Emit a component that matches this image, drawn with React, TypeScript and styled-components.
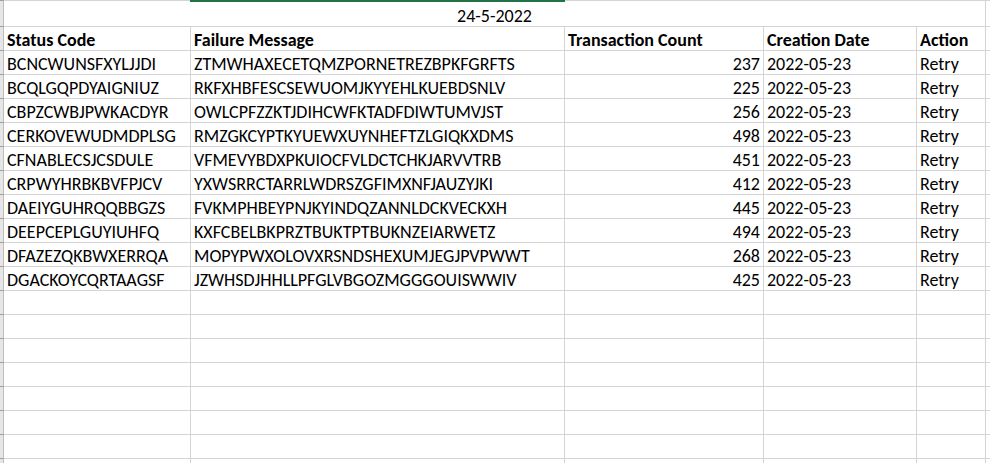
import React from 'react';
import styled, { createGlobalStyle } from 'styled-components';

const GlobalStyle = createGlobalStyle`
  html, body {
    margin: 0;
    padding: 0;
    background: #fff;
    overflow: hidden;
  }
`;

const GRID = '#d4d4d4';

// worksheet: row-header sliver, columns A-E, then the rest of the window
const Sheet = styled.div`
  position: relative;
  display: grid;
  grid-template-columns: 4px 187px 374px 199px 153px 69px 1fr;
  width: 990px;
  height: 463px;
  overflow: hidden;
  font-family: Carlito, Calibri, Lato, sans-serif;
  font-size: 18px;
  color: #000;
`;

const Cell = styled.div<{ $h: number; $align?: 'left' | 'right' | 'center'; $bold?: boolean; $span?: number }>`
  box-sizing: border-box;
  height: ${p => p.$h}px;
  border-right: 1px solid ${GRID};
  border-bottom: 1px solid ${GRID};
  display: flex;
  align-items: flex-end;
  justify-content: ${p => (p.$align === 'right' ? 'flex-end' : p.$align === 'center' ? 'center' : 'flex-start')};
  padding: 0 3px 1px;
  line-height: 18px;
  font-weight: ${p => (p.$bold ? 700 : 400)};
  white-space: nowrap;
  overflow: hidden;
  ${p => (p.$span ? `grid-column: span ${p.$span};` : '')}
`;

// the bottom edge of the row above, cut off by the window
const EdgeCell = styled.div`
  height: 0;
  border-right: 1px solid ${GRID};
  border-bottom: 1px solid ${GRID};
`;

const Filler = styled.div<{ $h: number }>`
  box-sizing: border-box;
  height: ${p => p.$h}px;
  border-bottom: 1px solid ${GRID};
`;

const RowHead = styled.div<{ $h: number }>`
  box-sizing: border-box;
  height: ${p => p.$h}px;
  background: #e6e6e6;
  border-right: 1px solid #bdbdbd;
  border-bottom: 1px solid #9f9f9f;
`;

const Selection = styled.div`
  position: absolute;
  top: 0;
  left: 190px;
  width: 375px;
  height: 2px;
  background: #217346;
`;

type Row = [string, string, number];

const rows: Row[] = [
  ['BCNCWUNSFXYLJJDI', 'ZTMWHAXECETQMZPORNETREZBPKFGRFTS', 237],
  ['BCQLGQPDYAIGNIUZ', 'RKFXHBFESCSEWUOMJKYYEHLKUEBDSNLV', 225],
  ['CBPZCWBJPWKACDYR', 'OWLCPFZZKTJDIHCWFKTADFDIWTUMVJST', 256],
  ['CERKOVEWUDMDPLSG', 'RMZGKCYPTKYUEWXUYNHEFTZLGIQKXDMS', 498],
  ['CFNABLECSJCSDULE', 'VFMEVYBDXPKUIOCFVLDCTCHKJARVVTRB', 451],
  ['CRPWYHRBKBVFPJCV', 'YXWSRRCTARRLWDRSZGFIMXNFJAUZYJKI', 412],
  ['DAEIYGUHRQQBBGZS', 'FVKMPHBEYPNJKYINDQZANNLDCKVECKXH', 445],
  ['DEEPCEPLGUYIUHFQ', 'KXFCBELBKPRZTBUKTPTBUKNZEIARWETZ', 494],
  ['DFAZEZQKBWXERRQA', 'MOPYPWXOLOVXRSNDSHEXUMJEGJPVPWWT', 268],
  ['DGACKOYCQRTAAGSF', 'JZWHSDJHHLLPFGLVBGOZMGGGOUISWWIV', 425],
];

const Line = ({ h, children }: { h: number; children?: React.ReactNode }) => (
  <>
    <RowHead $h={h} />
    {children}
    <Filler $h={h} />
  </>
);

export default function App() {
  return (
    <>
      <GlobalStyle />
      <Sheet>
        <Line h={1}>
          {[0, 1, 2, 3, 4].map(i => (
            <EdgeCell key={i} />
          ))}
        </Line>
        <Line h={26}>
          <Cell $h={26} $span={5} $align="center">24-5-2022</Cell>
        </Line>
        <Line h={24}>
          <Cell $h={24} $bold>Status Code</Cell>
          <Cell $h={24} $bold>Failure Message</Cell>
          <Cell $h={24} $bold>Transaction Count</Cell>
          <Cell $h={24} $bold>Creation Date</Cell>
          <Cell $h={24} $bold>Action</Cell>
        </Line>
        {rows.map(([code, msg, count]) => (
          <Line key={code} h={24}>
            <Cell $h={24}>{code}</Cell>
            <Cell $h={24}>{msg}</Cell>
            <Cell $h={24} $align="right">{count}</Cell>
            <Cell $h={24}>2022-05-23</Cell>
            <Cell $h={24}>Retry</Cell>
          </Line>
        ))}
        {Array.from({ length: 8 }, (_, i) => (
          <Line key={i} h={24}>
            {[0, 1, 2, 3, 4].map(j => (
              <Cell key={j} $h={24} />
            ))}
          </Line>
        ))}
        <Selection />
      </Sheet>
    </>
  );
}
